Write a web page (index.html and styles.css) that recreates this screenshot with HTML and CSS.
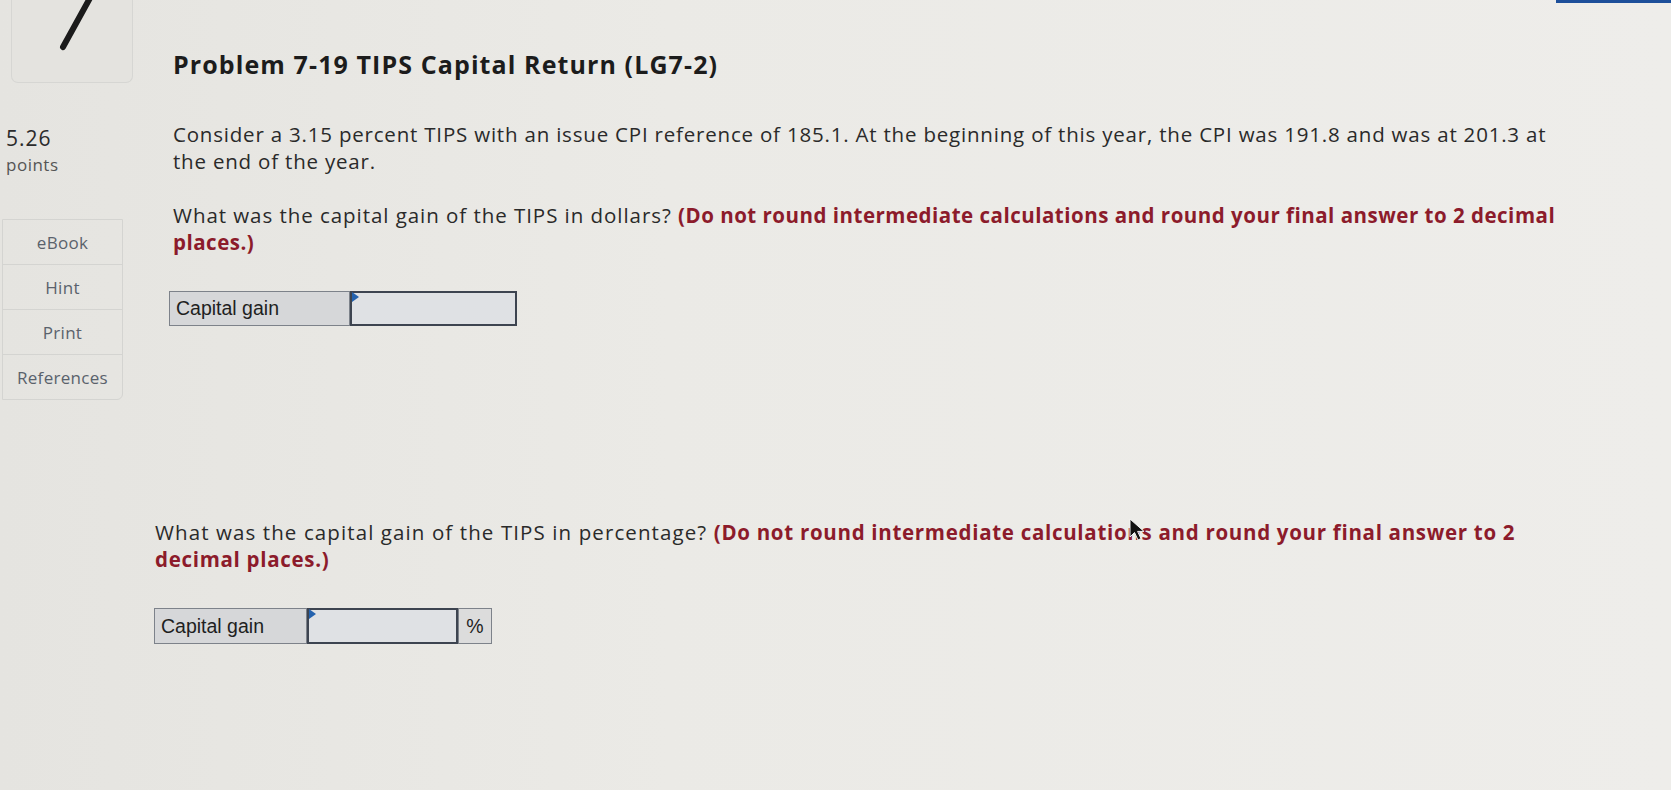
FILE: index.html
```html
<!DOCTYPE html>
<html lang="en">
<head>
<meta charset="utf-8">
<title>Problem 7-19 TIPS Capital Return (LG7-2)</title>
<link rel="stylesheet" href="styles.css">
</head>
<body>
<div class="topbar"></div>
<div class="page">
  <aside class="left">
    <div class="corner">
      <svg class="corner-mark" width="122" height="83" viewBox="0 0 122 83"><line x1="51" y1="47" x2="78" y2="-2" stroke="#1b1b1b" stroke-width="6" stroke-linecap="round"/></svg>
    </div>
    <div class="points">
      <div class="pts-num">5.26</div>
      <div class="pts-label">points</div>
    </div>
    <nav class="tools">
      <div class="tool">eBook</div>
      <div class="tool">Hint</div>
      <div class="tool">Print</div>
      <div class="tool">References</div>
    </nav>
  </aside>
  <main class="main">
    <h1 class="title">Problem 7-19 TIPS Capital Return (LG7-2)</h1>
    <p class="para">Consider a 3.15 percent TIPS with an issue CPI reference of 185.1. At the beginning of this year, the CPI was 191.8 and was at 201.3 at the end of the year.</p>
    <p class="para q1">What was the capital gain of the TIPS in dollars? <b class="red">(Do not round intermediate calculations and round your final answer to 2 decimal</b> <b class="red">places.)</b></p>
    <div class="answer a1">
      <div class="label">Capital gain</div>
      <div class="input"><span class="flag"></span></div>
    </div>
    <section class="part2">
      <p class="para q2">What was the capital gain of the TIPS in percentage? <b class="red">(Do not round intermediate calculations and round your final answer to 2</b> <b class="red">decimal places.)</b></p>
      <div class="answer a2">
        <div class="label">Capital gain</div>
        <div class="input"><span class="flag"></span></div>
        <div class="unit">%</div>
      </div>
    </section>
  </main>
</div>
<svg class="cursor" width="18" height="24" viewBox="0 0 18 24"><path d="M1 1 L1 19 L5.5 14.5 L9 22 L12 20.6 L8.6 13.4 L15 13.4 Z" fill="#111" stroke="#f2f2f2" stroke-width="1"/></svg>
</body>
</html>
```
FILE: styles.css
```css
html, body {
  margin: 0;
  padding: 0;
}
body {
  width: 1671px;
  height: 790px;
  overflow: hidden;
  background: linear-gradient(90deg, #e5e4e0 0%, #ebeae6 40%, #eeedea 100%);
  font-family: "Open Sans", "Lato", sans-serif;
  color: #262626;
  position: relative;
}
.topbar {
  position: absolute;
  top: 0;
  left: 1556px;
  width: 115px;
  height: 3px;
  background: #1d4f9a;
}
.page {
  display: grid;
  grid-template-columns: 173px 1392px;
}
.left {
  display: flex;
  flex-direction: column;
}
.corner {
  margin-left: 11px;
  width: 120px;
  height: 82px;
  border: 1px solid #d6d6d3;
  border-top: none;
  border-radius: 0 0 7px 7px;
  background: #e4e3df;
}
.corner-mark {
  display: block;
}
.points {
  margin-top: 43px;
  padding-left: 6px;
}
.pts-num {
  font-size: 21px;
  line-height: 24px;
  letter-spacing: 1px;
  color: #2b2b2b;
}
.pts-label {
  font-size: 17px;
  line-height: 20px;
  letter-spacing: 0.5px;
  margin-top: 5px;
  color: #555;
}
.tools {
  margin-top: 44px;
  margin-left: 2px;
  width: 119px;
  border: 1px solid #d4d4d1;
  border-radius: 0 0 6px 0;
}
.tool {
  height: 44px;
  display: flex;
  align-items: center;
  justify-content: center;
  font-size: 17px;
  letter-spacing: 0.3px;
  color: #5a626c;
  border-top: 1px solid #d4d4d1;
}
.tool:first-child {
  border-top: none;
}
.main {
  padding-top: 49px;
}
.title {
  margin: 0;
  font-size: 25px;
  line-height: 30px;
  font-weight: 700;
  letter-spacing: 1.1px;
  color: #1c1c1c;
}
.para {
  margin: 0;
  font-size: 20.5px;
  line-height: 27px;
  letter-spacing: 0.8px;
  color: #2a2a2a;
}
.title + .para {
  margin-top: 42px;
}
.q1 {
  margin-top: 27px;
  letter-spacing: 0.95px;
}
.red {
  color: #8c1b2b;
  font-weight: 700;
  letter-spacing: 0.5px;
}
.answer {
  display: flex;
  height: 35px;
  font-family: "Liberation Sans", Arial, sans-serif;
  font-size: 19.5px;
  color: #1f1f1f;
}
.a1 {
  margin-top: 35px;
  margin-left: -4px;
}
.label {
  box-sizing: border-box;
  background: #d6d7d9;
  border: 1px solid #7d828a;
  display: flex;
  align-items: center;
  padding-left: 6px;
}
.a1 .label { width: 181px; }
.a2 .label { width: 153px; }
.input {
  box-sizing: border-box;
  position: relative;
  background: #dfe1e4;
  border: 2px solid #3d4450;
}
.a1 .input { width: 167px; }
.a2 .input { width: 151px; }
.flag {
  position: absolute;
  top: 0;
  left: 0;
  width: 0;
  height: 0;
  border-top: 5px solid transparent;
  border-bottom: 5px solid transparent;
  border-left: 7px solid #2462ae;
  transform: translateY(-1px);
}
.unit {
  box-sizing: border-box;
  width: 34px;
  background: #dcdcdc;
  border: 1px solid #7d828a;
  display: flex;
  align-items: center;
  justify-content: center;
}
.part2 {
  margin-left: -18px;
  margin-top: 193px;
}
.q2 {
  letter-spacing: 1.1px;
}
.q2 .red {
  letter-spacing: 0.7px;
}
.a2 {
  margin-top: 35px;
  margin-left: -1px;
  height: 36px;
}
.cursor {
  position: absolute;
  left: 1129px;
  top: 518px;
}
```
